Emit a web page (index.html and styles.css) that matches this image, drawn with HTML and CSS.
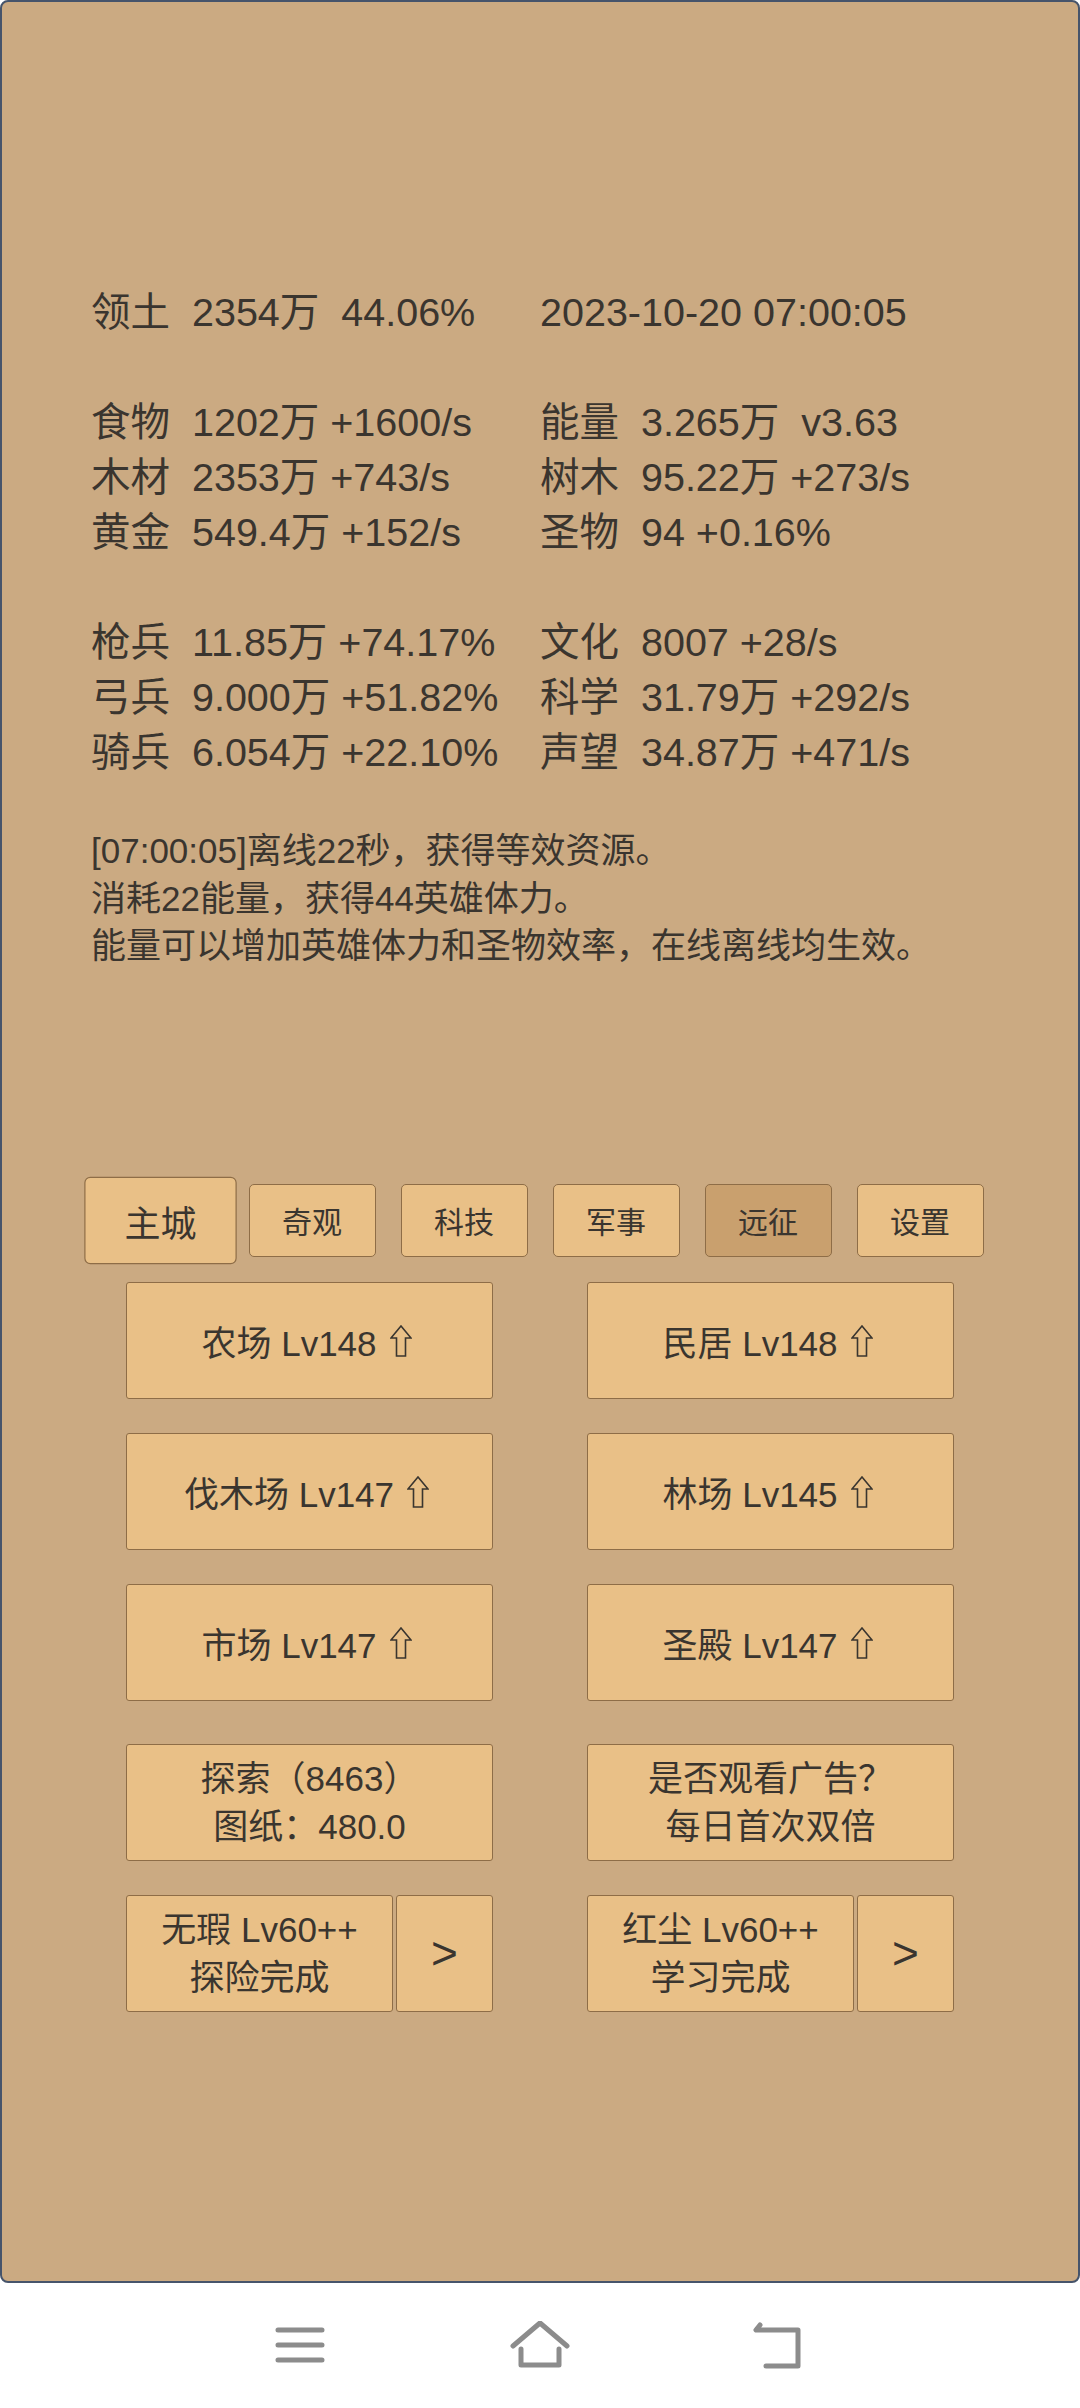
FILE: index.html
```html
<!DOCTYPE html>
<html lang="zh-CN">
<head>
    <meta charset="UTF-8">
    <meta name="viewport" content="width=device-width, initial-scale=1.0">
    <title>主城</title>
    <link rel="stylesheet" href="styles.css">
</head>
<body>
    <div class="game">
        <div class="stats">
            <div class="cell">领土  2354万  44.06%</div>
            <div class="cell">2023-10-20 07:00:05</div>
            <div class="blank"></div>
            <div class="cell">食物  1202万 +1600/s</div>
            <div class="cell">能量  3.265万  v3.63</div>
            <div class="cell">木材  2353万 +743/s</div>
            <div class="cell">树木  95.22万 +273/s</div>
            <div class="cell">黄金  549.4万 +152/s</div>
            <div class="cell">圣物  94 +0.16%</div>
            <div class="blank"></div>
            <div class="cell">枪兵  11.85万 +74.17%</div>
            <div class="cell">文化  8007 +28/s</div>
            <div class="cell">弓兵  9.000万 +51.82%</div>
            <div class="cell">科学  31.79万 +292/s</div>
            <div class="cell">骑兵  6.054万 +22.10%</div>
            <div class="cell">声望  34.87万 +471/s</div>
        </div>

        <div class="log">
            <div>[07:00:05]离线22秒，获得等效资源。</div>
            <div>消耗22能量，获得44英雄体力。</div>
            <div>能量可以增加英雄体力和圣物效率，在线离线均生效。</div>
        </div>

        <div class="tabs">
            <div class="tab active">主城</div>
            <div class="tab">奇观</div>
            <div class="tab">科技</div>
            <div class="tab">军事</div>
            <div class="tab current">远征</div>
            <div class="tab">设置</div>
        </div>

        <div class="buildings">
            <div class="btn">农场 Lv148<svg class="up" viewBox="0 0 22 32"><path d="M11 1 L21 13 H15.5 V31 H6.5 V13 H1 Z"/></svg></div>
            <div class="btn">民居 Lv148<svg class="up" viewBox="0 0 22 32"><path d="M11 1 L21 13 H15.5 V31 H6.5 V13 H1 Z"/></svg></div>
            <div class="btn">伐木场 Lv147<svg class="up" viewBox="0 0 22 32"><path d="M11 1 L21 13 H15.5 V31 H6.5 V13 H1 Z"/></svg></div>
            <div class="btn">林场 Lv145<svg class="up" viewBox="0 0 22 32"><path d="M11 1 L21 13 H15.5 V31 H6.5 V13 H1 Z"/></svg></div>
            <div class="btn">市场 Lv147<svg class="up" viewBox="0 0 22 32"><path d="M11 1 L21 13 H15.5 V31 H6.5 V13 H1 Z"/></svg></div>
            <div class="btn">圣殿 Lv147<svg class="up" viewBox="0 0 22 32"><path d="M11 1 L21 13 H15.5 V31 H6.5 V13 H1 Z"/></svg></div>
            <div class="btn two gap-top">探索（8463）<br>图纸：480.0</div>
            <div class="btn two gap-top">是否观看广告？<br>每日首次双倍</div>
            <div class="split">
                <div class="btn two">无瑕 Lv60++<br>探险完成</div>
                <div class="btn more">&gt;</div>
            </div>
            <div class="split">
                <div class="btn two">红尘 Lv60++<br>学习完成</div>
                <div class="btn more">&gt;</div>
            </div>
        </div>
    </div>

    <div class="navbar">
        <svg class="nav-icon" viewBox="0 0 60 50">
            <path d="M8 9 H52 M8 24 H52 M8 39 H52"/>
        </svg>
        <svg class="nav-icon" viewBox="0 0 60 50">
            <path d="M3 25 L30 2 L57 25 M11 28 V44 H49 V28"/>
        </svg>
        <svg class="nav-icon" viewBox="0 0 60 50">
            <path d="M10 4 L6 9 H48 V45 H16"/>
        </svg>
    </div>
</body>
</html>
```

FILE: styles.css
```css
body {
    margin: 0;
    width: 1080px;
    height: 2408px;
    background: #ffffff;
    font-family: "Liberation Sans", "Noto Sans CJK SC", sans-serif;
    color: #3a352f;
}
.game {
    height: 2283px;
    box-sizing: border-box;
    border: 2px solid #46546b;
    border-radius: 8px;
    background: #cbaa82;
    padding-top: 283px;
}
.stats {
    display: grid;
    grid-template-columns: 449px auto;
    padding-left: 89px;
    font-size: 39.5px;
    line-height: 55px;
}
.cell {
    white-space: pre;
}
.blank {
    grid-column: 1 / 3;
    height: 55px;
}
.log {
    margin-top: 47px;
    padding-left: 89px;
    font-size: 35px;
    line-height: 47.5px;
}
.tabs {
    display: flex;
    justify-content: center;
    gap: 25px;
    margin-top: 214px;
}
.tab {
    width: 127px;
    height: 73px;
    box-sizing: border-box;
    display: flex;
    align-items: center;
    justify-content: center;
    background: #e9c087;
    border: 1.5px solid #8e6d47;
    border-radius: 5px;
    font-size: 30px;
}
.tab.active {
    transform: scale(1.2);
}
.tab.current {
    background: #c9a06e;
}
.buildings {
    display: grid;
    grid-template-columns: 367px 367px;
    column-gap: 94px;
    row-gap: 34px;
    justify-content: center;
    margin-top: 25px;
}
.btn {
    height: 117px;
    box-sizing: border-box;
    display: flex;
    align-items: center;
    justify-content: center;
    text-align: center;
    background: #e9c087;
    border: 1.5px solid #8e6d47;
    border-radius: 3px;
    font-size: 35px;
}
.btn.two {
    line-height: 48px;
    padding-top: 2px;
}
.gap-top {
    margin-top: 9px;
}
.up {
    width: 22px;
    height: 32px;
    margin-left: 13px;
    margin-right: 6px;
    margin-top: 2px;
}
.up path {
    fill: none;
    stroke: #3a352f;
    stroke-width: 1.6;
}
.split {
    display: flex;
    gap: 3px;
}
.split .two {
    flex: 1;
}
.btn.more {
    width: 97px;
    font-size: 46px;
}
.navbar {
    height: 125px;
    display: flex;
    justify-content: center;
    align-items: center;
    gap: 180px;
}
.nav-icon {
    width: 60px;
    height: 50px;
}
.nav-icon path {
    fill: none;
    stroke: #8c8c8c;
    stroke-width: 5;
    stroke-linecap: round;
    stroke-linejoin: round;
}
```
